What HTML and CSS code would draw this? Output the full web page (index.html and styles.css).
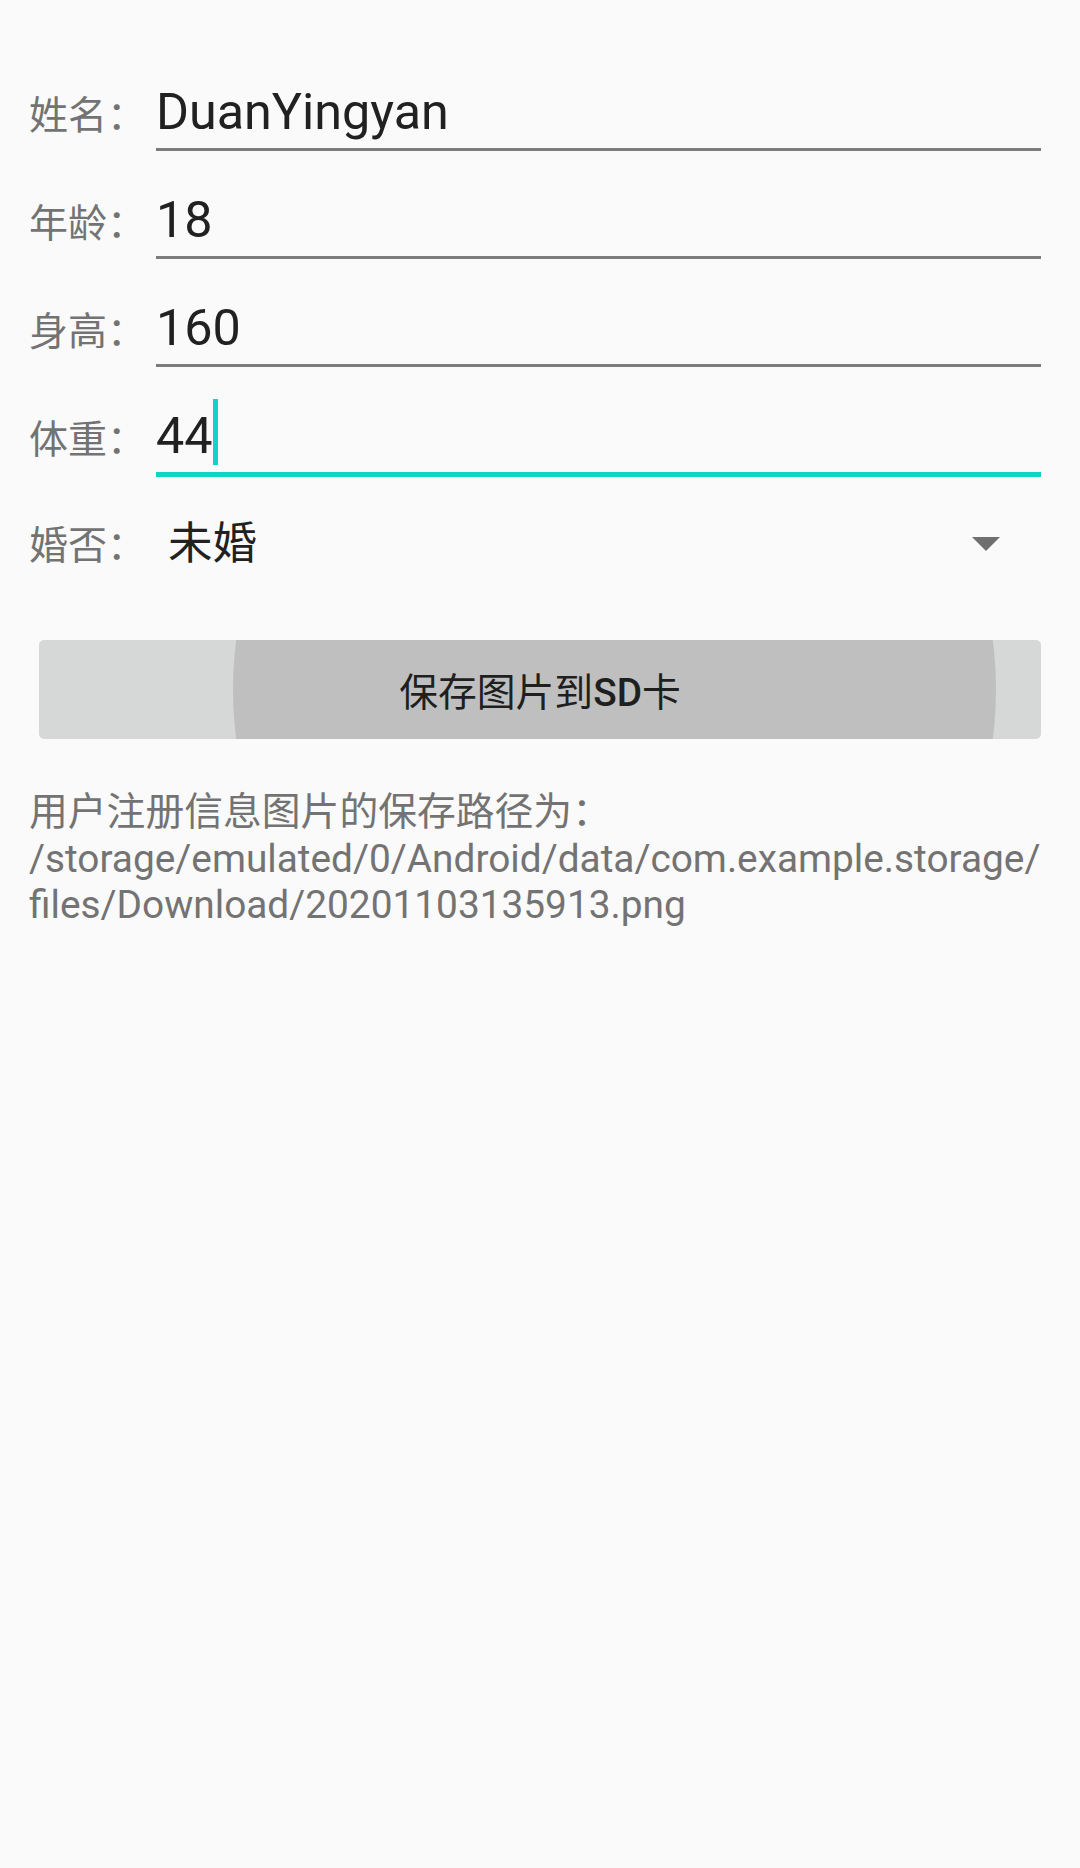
FILE: index.html
```html
<!DOCTYPE html>
<html lang="zh-CN">
<head>
<meta charset="utf-8">
<title>用户注册</title>
<link rel="stylesheet" href="styles.css">
</head>
<body>
<div class="page">
  <div class="form">
    <div class="row">
      <span class="label">姓名：</span>
      <div class="field">DuanYingyan</div>
    </div>
    <div class="row">
      <span class="label">年龄：</span>
      <div class="field">18</div>
    </div>
    <div class="row">
      <span class="label">身高：</span>
      <div class="field">160</div>
    </div>
    <div class="row">
      <span class="label">体重：</span>
      <div class="field focused">44<span class="caret"></span></div>
    </div>
    <div class="row spinner-row">
      <span class="label">婚否：</span>
      <div class="spinner">
        <span class="spinner-text">未婚</span>
        <span class="arrow"></span>
      </div>
    </div>
  </div>
  <button class="btn" type="button"><span class="ripple"></span><span class="btn-text">保存图片到<span class="btn-latin">SD</span>卡</span></button>
  <p class="path">用户注册信息图片的保存路径为：<br>/storage/emulated/0/Android/data/com.example.storage/<br>files/Download/20201103135913.png</p>
</div>
</body>
</html>
```
FILE: styles.css
```css
html, body {
  margin: 0;
  padding: 0;
  background: #fafafa;
}

body {
  width: 1080px;
  height: 1868px;
  overflow: hidden;
  font-family: Roboto, "Noto Sans CJK SC", sans-serif;
}

.page {
  padding: 43px 39px 0 29px;
}

.row {
  display: flex;
  align-items: baseline;
  padding-top: 40px;
}

.label {
  flex: 0 0 127px;
  font-size: 39px;
  color: #737373;
  white-space: nowrap;
}

.field {
  flex: 1;
  font-size: 50.3px;
  line-height: 58px;
  padding-bottom: 7px;
  border-bottom: 3px solid #7c7c7c;
  color: #212121;
  white-space: nowrap;
}

.field.focused {
  border-bottom: 5px solid #12d3c4;
}

.caret {
  display: inline-block;
  width: 5px;
  height: 66px;
  margin-top: -10px;
  vertical-align: -12px;
  background: #12d3c4;
}

.spinner-row {
  padding-top: 37px;
}

.spinner {
  flex: 1;
  display: flex;
  align-items: center;
}

.spinner-text {
  padding-left: 12px;
  font-size: 44.5px;
  line-height: 52px;
  color: #212121;
}

.arrow {
  margin-left: auto;
  margin-right: 41px;
  width: 0;
  height: 0;
  border-left: 14px solid transparent;
  border-right: 14px solid transparent;
  border-top: 14px solid #6f6f6f;
}

.btn {
  position: relative;
  display: flex;
  align-items: center;
  justify-content: center;
  width: 1002px;
  height: 99px;
  margin: 69.5px 0 0 10px;
  padding: 0;
  border: none;
  border-radius: 5px;
  background: #d6d7d7;
  overflow: hidden;
  font-family: Roboto, "Noto Sans CJK SC", sans-serif;
  font-size: 38.8px;
  color: #1f1f1f;
}

.ripple {
  position: absolute;
  left: 194px;
  top: -332px;
  width: 763px;
  height: 763px;
  border-radius: 50%;
  background: #bebfbe;
}

.btn-text {
  position: relative;
}

.btn-latin {
  font-weight: 500;
}

.path {
  margin: 50.5px 0 0 0;
  font-size: 38.8px;
  line-height: 46.5px;
  color: #737373;
  white-space: nowrap;
}
```
